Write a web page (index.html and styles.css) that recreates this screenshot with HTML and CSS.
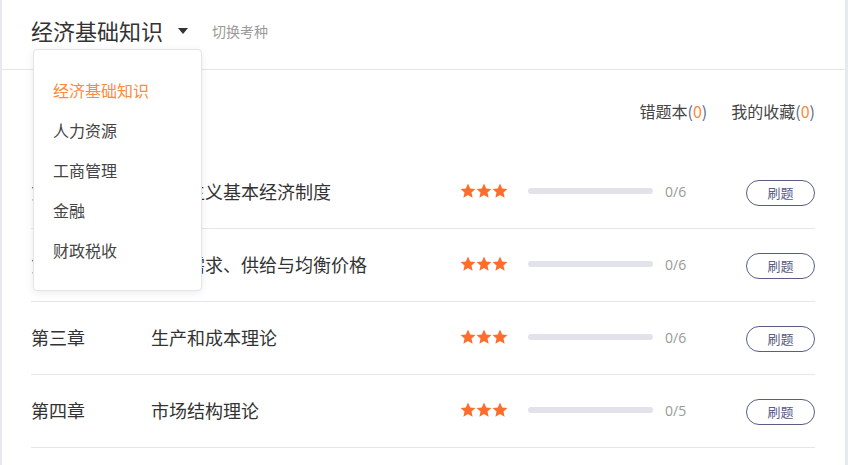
FILE: index.html
```html
<!DOCTYPE html>
<html lang="zh">
<head>
<meta charset="utf-8">
<link rel="stylesheet" href="styles.css">
</head>
<body>
<div class="page">
  <header class="header">
    <h1 class="title">经济基础知识</h1>
    <span class="caret"></span>
    <span class="switch">切换考种</span>
  </header>
  <div class="dropdown">
    <div class="dd-item active">经济基础知识</div>
    <div class="dd-item">人力资源</div>
    <div class="dd-item">工商管理</div>
    <div class="dd-item">金融</div>
    <div class="dd-item">财政税收</div>
  </div>
  <main class="main">
    <div class="links">
      <span class="link">错题本<span class="paren">(</span><span class="num">0</span><span class="paren">)</span></span>
      <span class="link">我的收藏<span class="paren">(</span><span class="num">0</span><span class="paren">)</span></span>
    </div>
    <div class="rows">
      <div class="row">
        <span class="chap">第一章</span>
        <span class="name">社会主义基本经济制度</span>
        <span class="stars"><svg viewBox="0 0 48 16" width="48" height="16"><g fill="#ff6c2b"><path id="s" d="M8 0.6l2.2 4.8 5.2 0.6-3.9 3.5 1.1 5.2L8 12.1 3.4 14.7l1.1-5.2L0.6 6l5.2-0.6z"/><use href="#s" x="16"/><use href="#s" x="32"/></g></svg></span>
        <span class="bar"></span>
        <span class="count">0/6</span>
        <button class="btn">刷题</button>
      </div>
      <div class="row">
        <span class="chap">第二章</span>
        <span class="name">市场需求、供给与均衡价格</span>
        <span class="stars"><svg viewBox="0 0 48 16" width="48" height="16"><g fill="#ff6c2b"><use href="#s"/><use href="#s" x="16"/><use href="#s" x="32"/></g></svg></span>
        <span class="bar"></span>
        <span class="count">0/6</span>
        <button class="btn">刷题</button>
      </div>
      <div class="row">
        <span class="chap">第三章</span>
        <span class="name">生产和成本理论</span>
        <span class="stars"><svg viewBox="0 0 48 16" width="48" height="16"><g fill="#ff6c2b"><use href="#s"/><use href="#s" x="16"/><use href="#s" x="32"/></g></svg></span>
        <span class="bar"></span>
        <span class="count">0/6</span>
        <button class="btn">刷题</button>
      </div>
      <div class="row">
        <span class="chap">第四章</span>
        <span class="name">市场结构理论</span>
        <span class="stars"><svg viewBox="0 0 48 16" width="48" height="16"><g fill="#ff6c2b"><use href="#s"/><use href="#s" x="16"/><use href="#s" x="32"/></g></svg></span>
        <span class="bar"></span>
        <span class="count">0/5</span>
        <button class="btn">刷题</button>
      </div>
    </div>
  </main>
</div>
</body>
</html>
```
FILE: styles.css
```css
* { box-sizing: border-box; }
html, body { margin: 0; padding: 0; background: #fff; }
body {
  font-family: "Noto Sans CJK SC", "Open Sans", sans-serif;
  color: #333;
}
.page {
  position: relative;
  height: 465px;
  border-left: 2px solid #e8e8ef;
  border-right: 3px solid #e8e8ef;
  overflow: hidden;
}
.header {
  height: 70px;
  border-bottom: 1px solid #e6e6e6;
  display: flex;
  align-items: center;
  padding: 0 0 10px 29px;
}
.title {
  margin: 0;
  font-size: 22px;
  font-weight: 400;
  line-height: 30px;
  color: #333;
}
.caret {
  width: 0;
  height: 0;
  margin-left: 15px;
  margin-top: 2px;
  border-left: 5px solid transparent;
  border-right: 5px solid transparent;
  border-top: 6px solid #333;
}
.switch {
  margin-left: 24px;
  font-size: 14px;
  color: #9a9a9a;
  margin-top: 2px;
}
.dropdown {
  position: absolute;
  left: 31px;
  top: 49px;
  width: 169px;
  height: 242px;
  background: #fff;
  border: 1px solid #e2e4ea;
  border-radius: 4px;
  box-shadow: 0 2px 8px rgba(0,0,0,0.08);
  padding-top: 20px;
  z-index: 5;
}
.dd-item {
  height: 40px;
  line-height: 40px;
  padding-left: 19px;
  font-size: 16px;
  color: #444;
}
.dd-item.active { color: #ff8a3d; }
.main { padding: 0 30px 0 29px; }
.links {
  display: flex;
  justify-content: flex-end;
  gap: 24px;
  padding-top: 30px;
  height: 52px;
  line-height: 22px;
  font-size: 16px;
  color: #444;
}
.paren { color: #5a6b8c; }
.num { color: #ff8a3d; }
.rows { margin-top: 34px; }
.row {
  display: flex;
  align-items: center;
  height: 73px;
  padding-bottom: 2px;
  border-bottom: 1px solid #e6e6e6;
  font-size: 18px;
  color: #333;
}
.chap { width: 120px; }
.name { width: 309px; }
.stars { display: flex; width: 48px; margin-right: 20px; margin-top: -1px; }
.stars svg { display: block; }
.bar {
  width: 125px;
  height: 6px;
  border-radius: 3px;
  background: #e2e2ea;
}
.count {
  margin-left: 12px;
  font-family: "Open Sans", sans-serif;
  font-size: 14px;
  color: #999;
}
.btn {
  margin-left: auto;
  margin-top: 4px;
  width: 69px;
  height: 26px;
  border: 1px solid #585d86;
  border-radius: 13px;
  background: #fff;
  font-family: "Noto Sans CJK SC", sans-serif;
  font-size: 13px;
  color: #585d86;
  padding: 0;
  line-height: 24px;
}
```
